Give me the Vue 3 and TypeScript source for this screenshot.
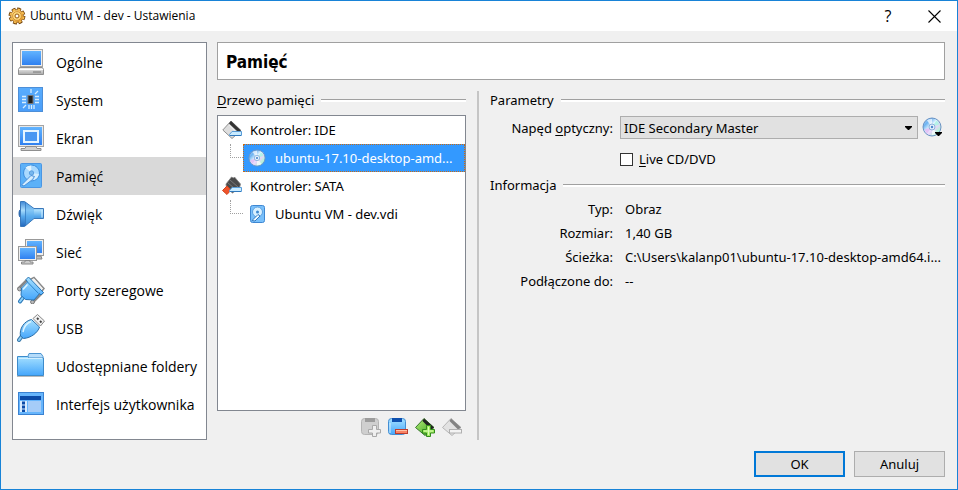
<script setup lang="ts">
import { ref } from 'vue'

interface Section {
  id: string
  label: string
}

const sections: Section[] = [
  { id: 'general', label: 'Ogólne' },
  { id: 'system', label: 'System' },
  { id: 'display', label: 'Ekran' },
  { id: 'storage', label: 'Pamięć' },
  { id: 'audio', label: 'Dźwięk' },
  { id: 'network', label: 'Sieć' },
  { id: 'serial', label: 'Porty szeregowe' },
  { id: 'usb', label: 'USB' },
  { id: 'folders', label: 'Udostępniane foldery' },
  { id: 'interface', label: 'Interfejs użytkownika' },
]

const details: { name: string; value: string }[] = [
  { name: 'Typ:', value: 'Obraz' },
  { name: 'Rozmiar:', value: '1,40 GB' },
  { name: 'Ścieżka:', value: 'C:\\Users\\kalanp01\\ubuntu-17.10-desktop-amd64.i...' },
  { name: 'Podłączone do:', value: '--' },
]

const active = ref('storage')
const drive = ref('IDE Secondary Master')
const live = ref(false)
</script>

<template>
  <div class="window">
    <svg class="defs" width="0" height="0" aria-hidden="true">
      <defs>
        <linearGradient id="blue" x1="0" y1="0" x2="0" y2="1">
          <stop offset="0" stop-color="#62b4ff" /><stop offset="1" stop-color="#2f80f0" />
        </linearGradient>
        <linearGradient id="sky" x1="0" y1="0" x2="0" y2="1">
          <stop offset="0" stop-color="#a5e0ff" /><stop offset="1" stop-color="#45a6fb" />
        </linearGradient>
        <linearGradient id="cone" x1="0" y1="0" x2="0" y2="1">
          <stop offset="0" stop-color="#3c86d6" /><stop offset="0.35" stop-color="#a9dcfb" />
          <stop offset="0.6" stop-color="#56a8ec" /><stop offset="1" stop-color="#2468bc" />
        </linearGradient>
        <linearGradient id="grey" x1="0" y1="0" x2="0" y2="1">
          <stop offset="0" stop-color="#f4f4f4" /><stop offset="1" stop-color="#a9a9a9" />
        </linearGradient>
        <linearGradient id="gold" x1="0" y1="0" x2="1" y2="1">
          <stop offset="0" stop-color="#ffe9a0" /><stop offset="1" stop-color="#e08a12" />
        </linearGradient>
        <linearGradient id="green" x1="0" y1="0" x2="1" y2="1">
          <stop offset="0" stop-color="#b8f07c" /><stop offset="1" stop-color="#2f9a16" />
        </linearGradient>
        <linearGradient id="disc" x1="0" y1="0" x2="1" y2="1">
          <stop offset="0" stop-color="#b8d8f8" /><stop offset="0.25" stop-color="#6fb4f2" />
          <stop offset="0.45" stop-color="#e6f7ff" /><stop offset="0.6" stop-color="#e9d4fa" />
          <stop offset="0.78" stop-color="#b6f2d8" /><stop offset="1" stop-color="#7fb2ee" />
        </linearGradient>
        <symbol id="cd" viewBox="0 0 20 20">
          <circle cx="10" cy="10" r="9" fill="url(#disc)" stroke="#6b93c4" />
          <path d="M10 10 5 3.4A8 8 0 0 1 10 2Z" fill="#fff" opacity=".7" />
          <path d="M10 10 15 16.6A8 8 0 0 1 10 18Z" fill="#fff" opacity=".7" />
          <path d="M10 10 2.4 12.5A8 8 0 0 0 5 16.4Z" fill="#e4b6f4" opacity=".8" />
          <path d="M10 10 17.6 7.5A8 8 0 0 0 14.5 3.5Z" fill="#a8f5e2" opacity=".8" />
          <circle cx="10" cy="10" r="3" fill="#e3f1fc" stroke="#8fb2dc" />
          <circle cx="10" cy="10" r="1.2" fill="#4b87cc" />
        </symbol>
      </defs>
    </svg>

    <header class="titlebar">
      <svg class="gear" width="18" height="18" viewBox="0 0 18 18" aria-hidden="true">
        <circle cx="9" cy="9" r="6.6" fill="none" stroke="#6b3c08" stroke-width="3.6" stroke-dasharray="3.6 1.58" />
        <circle cx="9" cy="9" r="6.4" fill="url(#gold)" stroke="#8a4f0c" stroke-width=".8" />
        <circle cx="9" cy="9" r="6.6" fill="none" stroke="#f5bc50" stroke-width="2" stroke-dasharray="2.6 2.58" stroke-dashoffset="-.5" />
        <circle cx="9" cy="9" r="4.4" fill="#fbd77c" stroke="#d08a2a" stroke-width=".8" />
        <circle cx="9" cy="9" r="2" fill="#fff" stroke="#92560e" />
      </svg>
      <h1>Ubuntu VM - dev - Ustawienia</h1>
      <button class="caption help" type="button" aria-label="Pomoc">?</button>
      <button class="caption" type="button" aria-label="Zamknij">
        <svg width="13" height="13" viewBox="0 0 13 13"><path d="M.5.5l12 12M12.5.5l-12 12" stroke="#000" stroke-width="1.1" /></svg>
      </button>
    </header>

    <main class="content">
      <nav class="sections">
        <button
          v-for="s in sections"
          :key="s.id"
          type="button"
          class="section"
          :class="{ current: s.id === active }"
          @click="active = s.id"
        >
          <svg width="28" height="28" viewBox="0 0 28 28" aria-hidden="true">
            <g v-if="s.id === 'general'">
              <rect x="3.5" y="1.5" width="22" height="17" fill="#ededed" stroke="#a4a4a4" />
              <rect x="5" y="3" width="19" height="14" fill="url(#blue)" />
              <path d="M2.5 19.5h23l1 2v5h-25v-5z" fill="url(#grey)" stroke="#8f8f8f" />
              <path d="M2 21.5h24" stroke="#fff" /><path d="M16 24h8" stroke="#777" />
            </g>
            <g v-else-if="s.id === 'system'">
              <rect x="1.5" y="1.5" width="24" height="24" fill="url(#blue)" stroke="#4d8fd8" />
              <rect x="2" y="2" width="23" height="23" fill="#56aafc" opacity=".7" />
              <rect x="11" y="9.5" width="5" height="8" fill="#222" stroke="#777" />
              <path d="M5 10.5h4M5 13.5h4M5 16.5h4M18 10.5h4M18 13.5h4M18 16.5h4M12 19v4M14.5 19v4M17 19v4M14 3v4M6 22l3-3M18 8l3-3" stroke="#d6edff" stroke-width="1.3" />
            </g>
            <g v-else-if="s.id === 'display'">
              <rect x="1.5" y="1.5" width="25" height="21" fill="#e8e8e8" stroke="#a4a4a4" />
              <rect x="3" y="3" width="22" height="18" fill="url(#blue)" />
              <rect x="7" y="7" width="14" height="11" fill="#4a98f2" stroke="#e6f5ff" stroke-width="2" />
              <path d="M9 22.5h10l1 2h4v2H4v-2h4z" fill="#d0d0d0" stroke="#8f8f8f" />
            </g>
            <g v-else-if="s.id === 'storage'">
              <rect x="3.5" y="1.5" width="21" height="24" rx="1" fill="#5cb1f8" stroke="#4a96e4" />
              <circle cx="14.5" cy="11" r="8" fill="#a9d9ff" stroke="#3d8ddd" />
              <path d="M14.5 11 8.5 5.5A8 8 0 0 1 14 3.5z" fill="#e2f4ff" />
              <path d="M14.5 11 22 12A8 8 0 0 1 17 18z" fill="#d4edff" />
              <circle cx="14.5" cy="11" r="2.2" fill="#78b7ee" stroke="#5a9fe0" />
              <path d="M4.5 23 14 13.5l3.5 1-2 3-8.5 6.5z" fill="#d5edff" stroke="#4a90da" />
            </g>
            <g v-else-if="s.id === 'audio'">
              <path d="M3.5 9.5v8c-2-1-2-7 0-8z" fill="#2b69b0" stroke="#2b69b0" />
              <path d="M3.5 1.5h4L17 8.5h9.5v10H17L7.5 26.5h-4z" fill="url(#cone)" stroke="#3a78ba" />
              <path d="M8 2.5 17 9v9l-9 7.5z" fill="#5db0f0" opacity=".5" />
              <path d="M8.5 2v24" stroke="#2b6cb4" opacity=".6" /><path d="M25 9.5v8" stroke="#d0efff" />
            </g>
            <g v-else-if="s.id === 'network'">
              <rect x="8.5" y="1.5" width="18" height="16" fill="#eee" stroke="#999" />
              <rect x="10" y="3" width="15" height="12" fill="url(#blue)" />
              <path d="M20 18h4l1 3h-7z" fill="#bbb" stroke="#888" />
              <rect x="1.5" y="8.5" width="18" height="14" fill="#eee" stroke="#999" />
              <rect x="3" y="10" width="15" height="11" fill="url(#blue)" />
              <path d="M8 22.5h5v1.5h3v2H4.5v-2H8z" fill="#ccc" stroke="#888" />
            </g>
            <g v-else-if="s.id === 'serial'">
              <path d="M13 3.5 17 1.5 27 12.5 25 15" fill="none" stroke="#8a8a8a" stroke-width="1.5" />
              <path d="M16 3l8.5 10" stroke="#eee" stroke-width="2" />
              <path d="M1 13 10 4M16 26 26 16" stroke="#888" stroke-width="2.5" />
              <circle cx="2.5" cy="13" r="1.9" fill="#bbb" stroke="#777" /><circle cx="15.5" cy="26" r="1.9" fill="#bbb" stroke="#777" />
              <path d="M3 25.5l3-4" stroke="#2b78b8" stroke-width="4" stroke-linecap="round" /><path d="M3 25.5l3-4" stroke="#8ed1fa" stroke-width="2" stroke-linecap="round" />
              <path d="M9 3.5 11.5 1 26.5 16.5 24 19 22.5 17.5 17 24 8.5 23.5 4 19.5 4.5 12 10.5 6z" fill="url(#sky)" stroke="#2874b4" />
              <path d="M10.5 6 21.5 17.5" stroke="#2c83cb" /><path d="M6 13.5 10.5 8.5" stroke="#dff5ff" stroke-width="1.5" />
            </g>
            <g v-else-if="s.id === 'usb'">
              <path d="M16 4.5 20.5.5 27.5 7 23.5 12z" fill="#f0f0f0" stroke="#888" />
              <path d="M20 4l1.5 1.5M23 7l1.5 1.5" stroke="#444" stroke-width="1.8" />
              <path d="M2 26l3-4" stroke="#3d7cae" stroke-width="4" stroke-linecap="round" /><path d="M2 26l3-4" stroke="#91d0f5" stroke-width="2" stroke-linecap="round" />
              <path d="M14.5 5.5 22.5 13C21 18.5 14 24 6.5 24.5L3.5 22C2 15 7 7 14.5 5.5z" fill="url(#sky)" stroke="#2b6da6" />
              <path d="M6 18C7 12.5 10 9 14 7.5" fill="none" stroke="#dff5ff" stroke-width="1.5" />
            </g>
            <g v-else-if="s.id === 'folders'">
              <path d="M10.5 5.5 12 1.5h12l2 3v8H10.5z" fill="#b5dcfa" stroke="#4c95d1" />
              <path d="M.5 4.5h10l2 1.5h14v17.500H.5z" fill="url(#sky)" stroke="#3d8bcb" />
              <path d="M1.5 6.5h24" stroke="#d2efff" /><path d="M0 24.5h27" stroke="#777" opacity=".5" />
            </g>
            <g v-else>
              <rect x="1.5" y="2.5" width="25" height="22" fill="#66b5fc" stroke="#3a82d2" />
              <rect x="3" y="6" width="21" height="4" fill="#0b4ba8" />
              <rect x="3" y="11" width="7" height="11" fill="#d8ecff" /><rect x="11" y="11" width="13" height="11" fill="#a5ccf8" />
              <path d="M5 11.5h3v3H5zM5 15.5h3v3H5zM5 19.5h3v2.5H5z" fill="#0b4ba8" />
            </g>
          </svg>
          <span>{{ s.label }}</span>
        </button>
      </nav>

      <div class="page">
        <h2>Pamięć</h2>
        <div class="columns">
          <section class="tree-pane">
            <h3><span><u>D</u>rzewo pamięci</span></h3>
            <ul class="tree">
              <li class="row">
                <svg width="20" height="20" viewBox="0 0 20 20" aria-hidden="true">
                  <path d="M.8 10 9 1l10 9.5L10 18.5z" fill="#dedede" stroke="#909090" />
                  <path d="M9 1l10 9.5-3 1.5L7 3.5z" fill="#333" /><path d="M7 5l7 7" stroke="#eee" />
                  <path d="M7.5 14.5 10 11.5h9.5v4h-12z" fill="#c9ebff" stroke="#5a9dd8" /><path d="M8 15.5h11" stroke="#2f78bc" />
                </svg>
                <span>Kontroler: IDE</span>
              </li>
              <li class="row child">
                <i class="branch"></i>
                <button type="button" class="leaf selected">
                  <svg width="18" height="18" aria-hidden="true"><use href="#cd" /></svg>
                  <span>ubuntu-17.10-desktop-amd...</span>
                </button>
              </li>
              <li class="row">
                <svg width="20" height="20" viewBox="0 0 20 20" aria-hidden="true">
                  <path d="M4 8 9.5 1l2 1 1-1 6 7-1 4-7 5-6-5z" fill="#4a4a4a" stroke="#858585" stroke-width=".8" />
                  <path d="M8 4l8 7M6 7l6 5" stroke="#777" />
                  <path d="M.5 14.500 5 10l4 4-4 4.5z" fill="#f0532a" stroke="#d0451e" />
                  <path d="M7.5 14.5 10 11.5h9.5v4h-12z" fill="#c9ebff" stroke="#5a9dd8" /><path d="M8 15.5h11" stroke="#2f78bc" />
                </svg>
                <span>Kontroler: SATA</span>
              </li>
              <li class="row child">
                <i class="branch"></i>
                <button type="button" class="leaf">
                  <svg width="18" height="18" viewBox="0 0 18 18" aria-hidden="true">
                    <rect x="2.5" y=".5" width="14" height="17" rx="2" fill="#79c0fb" stroke="#3e87d2" />
                    <circle cx="9.5" cy="7" r="5" fill="#d8f0ff" stroke="#5a9fe0" />
                    <circle cx="9.5" cy="7" r="1.5" fill="#3f89d0" />
                    <path d="M4 15.5 10 9.5l2 1.5-5 5z" fill="#eff9ff" stroke="#357bc0" />
                  </svg>
                  <span>Ubuntu VM - dev.vdi</span>
                </button>
              </li>
            </ul>
            <div class="tools">
              <button type="button" disabled aria-label="Dodaj załącznik">
                <svg width="20" height="20" viewBox="0 0 20 20">
                  <rect x=".5" y="1.5" width="17" height="16" rx="3" fill="#cfcfcf" stroke="#b4b4b4" />
                  <path d="M4 1h10v4H4z" fill="#9c9c9c" />
                  <path d="M11.500 8.5h4v4h4v3.5h-4v3.5h-4V16h-4v-3.5h4z" fill="#efefef" stroke="#a9a9a9" />
                </svg>
              </button>
              <button type="button" aria-label="Usuń załącznik">
                <svg width="20" height="20" viewBox="0 0 20 20">
                  <rect x=".5" y="1.5" width="17" height="16" rx="3" fill="url(#sky)" stroke="#438ed3" />
                  <path d="M4 1h10v4H4z" fill="#0d4fae" /><path d="M2 6v10" stroke="#d9f3ff" />
                  <rect x="7.5" y="12.5" width="12" height="4" fill="#f98365" stroke="#bd3c2d" />
                  <path d="M8 13.5h11" stroke="#ffc2a7" />
                </svg>
              </button>
              <button type="button" aria-label="Dodaj kontroler">
                <svg width="20" height="20" viewBox="0 0 20 20">
                  <path d="M.5 10.5 9 1.5l10 9-9 8z" fill="url(#green)" stroke="#37782b" />
                  <path d="M9 1.5l10 9-3 2L7.5 4z" fill="#222" />
                  <path d="M11.5 8.5h4v4h4v3.5h-4v3.5h-4V16h-4v-3.5h4z" fill="#a1e961" stroke="#338c1c" />
                  <path d="M13.5 10v8M9 14h9" stroke="#d9ffb8" />
                </svg>
              </button>
              <button type="button" disabled aria-label="Usuń kontroler">
                <svg width="20" height="20" viewBox="0 0 20 20">
                  <path d="M.5 10.5 9 1.5l10 9-9 8z" fill="#e2e2e2" stroke="#b5b5b5" />
                  <path d="M9 1.5l10 9-3 2L7.5 4z" fill="#838383" />
                  <rect x="7.5" y="12.5" width="12" height="3.5" fill="#f3f3f3" stroke="#b0b0b0" />
                </svg>
              </button>
            </div>
          </section>

          <div class="splitter"></div>

          <section class="details">
            <h3><span>Parametry</span></h3>
            <div class="fields">
              <label class="name" for="drive">Napęd <u>o</u>ptyczny:</label>
              <div class="drive">
                <div class="combo">
                  <select id="drive" v-model="drive">
                    <option>IDE Primary Master</option>
                    <option>IDE Primary Slave</option>
                    <option>IDE Secondary Master</option>
                    <option>IDE Secondary Slave</option>
                  </select>
                  <svg width="7" height="4" viewBox="0 0 7 4" aria-hidden="true"><path d="M0 0h7v1L4 4H3L0 1z" /></svg>
                </div>
                <button type="button" class="choose" aria-label="Wybierz dysk">
                  <svg width="22" height="22" viewBox="0 0 22 22">
                    <use href="#cd" width="20" height="20" /><path d="M13 15h7v1l-3 3h-1l-3-3z" fill="#000" />
                  </svg>
                </button>
              </div>
              <label class="check"><input v-model="live" type="checkbox" /><span><u>L</u>ive CD/DVD</span></label>
            </div>
            <h3><span>Informacja</span></h3>
            <dl>
              <template v-for="d in details" :key="d.name">
                <dt>{{ d.name }}</dt>
                <dd>{{ d.value }}</dd>
              </template>
            </dl>
          </section>
        </div>
      </div>
    </main>

    <footer>
      <button type="button" class="default">OK</button>
      <button type="button">Anuluj</button>
    </footer>
  </div>
</template>

<style>
body {
  background: #f0f0f0;
}
</style>

<style scoped>
* {
  box-sizing: border-box;
}
.window {
  display: flex;
  flex-direction: column;
  min-height: 100vh;
  border: 1px solid #1883d7;
  background: #f0f0f0;
  color: #000;
  font: 13px/16px "Noto Sans", "Open Sans", sans-serif;
}
.defs {
  position: absolute;
}
button {
  padding: 0;
  border: 0;
  background: none;
  color: inherit;
  font: inherit;
}
svg {
  display: block;
  flex: none;
}
h1,
h2,
h3,
ul,
dl,
dd {
  margin: 0;
  padding: 0;
}
u {
  text-underline-offset: 2px;
}
.titlebar {
  display: flex;
  align-items: center;
  height: 30px;
  padding-left: 7px;
  background: #fff;
}
h1 {
  flex: 1;
  padding-left: 4px;
  font: 12px/16px "Open Sans", sans-serif;
}
.caption {
  display: flex;
  align-items: center;
  justify-content: center;
  width: 46px;
  height: 30px;
}
.help {
  font: 16px/20px "Open Sans", sans-serif;
}
.content {
  display: flex;
  flex: 1;
  gap: 10px;
  padding: 11px 12px 0 11px;
}
.sections {
  width: 195px;
  flex: none;
  border: 1px solid #828790;
  background: #fff;
}
.section {
  display: flex;
  align-items: center;
  gap: 11px;
  width: 100%;
  height: 38px;
  padding-left: 4px;
  font: 14px/20px "Open Sans", sans-serif;
  text-align: left;
  white-space: nowrap;
}
.section span {
  padding-top: 2px;
}
.current {
  background: #d9d9d9;
}
.page {
  display: flex;
  flex: 1;
  flex-direction: column;
  min-width: 0;
}
h2 {
  padding: 9px 8px 7px;
  border: 1px solid #a0a0a0;
  background: #fff;
  font: bold 17px/20px "DejaVu Sans Condensed", "Noto Sans", sans-serif;
}
.columns {
  display: flex;
  flex: 1;
  padding-top: 11px;
}
h3 {
  display: flex;
  align-items: center;
  gap: 7px;
  height: 18px;
  font-size: 13px;
  font-weight: 400;
}
h3::after {
  content: "";
  flex: 1;
  height: 2px;
  border-top: 1px solid #a0a0a0;
  background: #fff;
}
.tree-pane {
  display: flex;
  flex-direction: column;
  width: 249px;
  flex: none;
}
.tree {
  flex: 1;
  margin-top: 6px;
  border: 1px solid #828790;
  background: #fff;
  list-style: none;
}
.row {
  display: flex;
  align-items: center;
  height: 28px;
  gap: 8px;
  padding-left: 4px;
}
.child {
  gap: 0;
  padding-left: 12px;
}
.branch {
  align-self: flex-start;
  width: 13px;
  height: 14px;
  border: dotted #a0a0a0;
  border-width: 0 0 1px 1px;
}
.leaf {
  display: flex;
  flex: 1;
  align-items: center;
  gap: 9px;
  height: 28px;
  padding-left: 4px;
  border: 1px solid transparent;
  white-space: nowrap;
}
.selected {
  border: 1px dotted #cc6a10;
  background: #3399ff;
  color: #fff;
}
.tools {
  display: flex;
  justify-content: flex-end;
  gap: 7px;
  padding: 6px 4px 3px 0;
}
.splitter {
  width: 2px;
  margin-left: 11px;
  background: #c5c5c5;
}
.details {
  flex: 1;
  min-width: 0;
  padding-left: 11px;
}
.fields,
dl {
  display: grid;
  grid-template-columns: 123px 1fr;
}
.fields {
  gap: 12px 7px;
  padding: 7px 0 9px;
}
.name,
dt {
  align-self: center;
  text-align: right;
}
.drive {
  display: flex;
  align-items: center;
  gap: 4px;
}
.combo {
  display: flex;
  flex: 1;
  align-items: center;
  position: relative;
}
.combo svg {
  position: absolute;
  right: 6px;
  pointer-events: none;
}
select {
  width: 100%;
  height: 23px;
  padding: 0 20px 0 3px;
  border: 1px solid #adadad;
  border-radius: 0;
  appearance: none;
  background: #e1e1e1;
  color: inherit;
  font: inherit;
}
.choose {
  padding-right: 1px;
}
.check {
  display: flex;
  grid-column: 2;
  align-items: center;
  gap: 6px;
}
.check input {
  width: 13px;
  height: 13px;
  margin: 0;
  border: 1px solid #333;
  appearance: none;
  background: #fff;
}
.check input:checked {
  background: #0078d7;
}
dl {
  gap: 0 12px;
  padding-top: 3px;
  line-height: 24px;
}
dd {
  min-width: 0;
  overflow: hidden;
  white-space: nowrap;
}
footer {
  display: flex;
  justify-content: flex-end;
  gap: 9px;
  padding: 11px 12px 12px;
}
footer button {
  width: 91px;
  height: 26px;
  border: 1px solid #adadad;
  background: #e1e1e1;
}
footer .default {
  border: 2px solid #0078d7;
}
</style>
